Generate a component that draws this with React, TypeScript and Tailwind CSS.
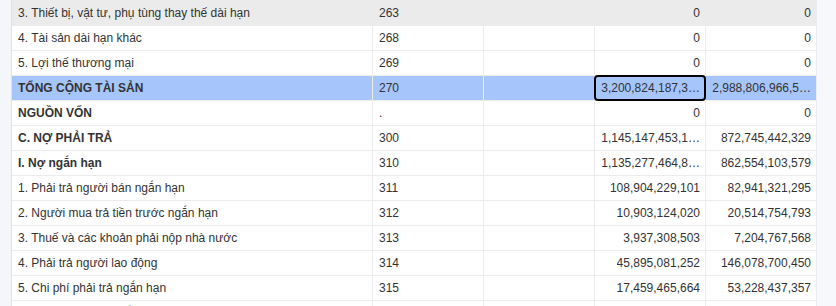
import React from "react";

type Row = {
  name: string;
  code: string;
  note?: string;
  current: string;
  previous: string;
  bold?: boolean;
  tone?: "hover" | "selected";
};

// values already clipped the way the grid shows them
const rows: Row[] = [
  { name: "3. Thiết bị, vật tư, phụ tùng thay thế dài hạn", code: "263", current: "0", previous: "0", tone: "hover" },
  { name: "4. Tài sản dài hạn khác", code: "268", current: "0", previous: "0" },
  { name: "5. Lợi thế thương mại", code: "269", current: "0", previous: "0" },
  { name: "TỔNG CỘNG TÀI SẢN", code: "270", current: "3,200,824,187,3…", previous: "2,988,806,966,5…", bold: true, tone: "selected" },
  { name: "NGUỒN VỐN", code: ".", current: "0", previous: "0", bold: true },
  { name: "C. NỢ PHẢI TRẢ", code: "300", current: "1,145,147,453,1…", previous: "872,745,442,329", bold: true },
  { name: "I. Nợ ngắn hạn", code: "310", current: "1,135,277,464,8…", previous: "862,554,103,579", bold: true },
  { name: "1. Phải trả người bán ngắn hạn", code: "311", current: "108,904,229,101", previous: "82,941,321,295" },
  { name: "2. Người mua trả tiền trước ngắn hạn", code: "312", current: "10,903,124,020", previous: "20,514,754,793" },
  { name: "3. Thuế và các khoản phải nộp nhà nước", code: "313", current: "3,937,308,503", previous: "7,204,767,568" },
  { name: "4. Phải trả người lao động", code: "314", current: "45,895,081,252", previous: "146,078,700,450" },
  { name: "5. Chi phí phải trả ngắn hạn", code: "315", current: "17,459,465,664", previous: "53,228,437,357" },
  { name: "6. Phải trả nội bộ ngắn hạn", code: "316", current: "0", previous: "0" },
];

function BalanceRow({ row, first }: { row: Row; first: boolean }) {
  const bg =
    row.tone === "hover"
      ? "bg-[#ebebeb]"
      : row.tone === "selected"
        ? "bg-[#a6c5fb]"
        : "bg-white";
  const cell = "flex items-center border-r border-[#ececec] min-w-0 whitespace-nowrap";
  return (
    <div
      className={`flex shrink-0 border-b border-[#ececec] ${bg} ${first ? "h-[26px]" : "h-[25px]"}`}
    >
      <div className={`${cell} w-[361px] px-[6px] ${row.bold ? "font-bold" : ""}`}>
        {row.name}
      </div>
      <div className={`${cell} w-[111px] px-[6px]`}>{row.code}</div>
      <div className={`${cell} w-[111px] px-[6px]`}>{row.note}</div>
      <div className={`${cell} relative w-[111px] justify-end pl-[5px] pr-[5px]`}>
        <span className="overflow-hidden">{row.current}</span>
        {row.tone === "selected" ? (
          <div className="pointer-events-none absolute -inset-px rounded-[4px] border-2 border-black" />
        ) : null}
      </div>
      <div className={`${cell} w-[111px] justify-end pl-[5px] pr-[5px]`}>
        <span className="overflow-hidden">{row.previous}</span>
      </div>
    </div>
  );
}

export default function App() {
  return (
    <div className="flex h-[306px] w-[836px] overflow-hidden bg-[#f7f8fb] font-['Liberation_Sans',Arial,sans-serif] text-[12px] text-[#333]">
      <div className="w-[12px] shrink-0 border-r border-[#dfe2e7] bg-[#f4f6f9]" />
      <div className="flex w-[805px] shrink-0 flex-col">
        {rows.map((row, index) => (
          <BalanceRow key={row.code + row.name} row={row} first={index === 0} />
        ))}
      </div>
      <div className="flex-1" />
    </div>
  );
}
